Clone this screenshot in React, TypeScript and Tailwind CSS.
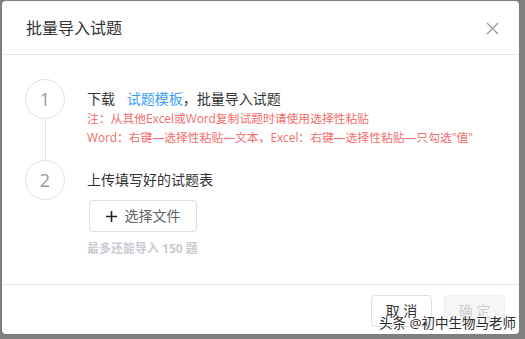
const font = { fontFamily: '"Open Sans", "Noto Sans CJK SC", sans-serif' };

export default function App() {
  return (
    <div className="relative h-[339px] w-[525px] overflow-hidden bg-[#7f7f7f]" style={font}>
      <div className="ml-[2px] mt-[1px] flex h-[333px] w-[517px] flex-col rounded-[4px] bg-white">
        {/* header */}
        <div className="flex h-[54px] shrink-0 items-center justify-between border-b border-[#e8e8e8] pl-6 pr-[20px]">
          <span className="text-base text-[#333]">批量导入试题</span>
          <svg width="13" height="13" viewBox="0 0 13 13" className="mt-[1px]">
            <path d="M1 1L12 12M12 1L1 12" stroke="#999" strokeWidth="1.3" fill="none" />
          </svg>
        </div>

        {/* body */}
        <div className="flex flex-1 flex-col pl-[23px] pt-[24px]">
          <div className="flex h-[81px] gap-[22px]">
            <div className="flex w-10 flex-col items-center">
              <div className="flex h-10 w-10 shrink-0 items-center justify-center rounded-full border border-[#e3e3e3] text-lg text-[#999]">1</div>
              <div className="w-px flex-1 bg-[#e3e3e3]" />
            </div>
            <div className="pt-[10px]">
              <div className="text-sm leading-5 text-[#333]">
                下载 <span className="ml-2 text-[#409eff]">试题模板</span>，批量导入试题
              </div>
              <div className="text-[11.8px] leading-[19px] text-[#f56c6c]">
                <p>注：从其他Excel或Word复制试题时请使用选择性粘贴</p>
                <p>Word：右键—选择性粘贴—文本，Excel：右键—选择性粘贴—只勾选"值"</p>
              </div>
            </div>
          </div>

          <div className="flex gap-[22px]">
            <div className="flex w-10 flex-col items-center">
              <div className="flex h-10 w-10 shrink-0 items-center justify-center rounded-full border border-[#e3e3e3] text-lg text-[#999]">2</div>
            </div>
            <div className="pt-[10px]">
              <div className="text-sm leading-5 text-[#333]">上传填写好的试题表</div>
              <button className="ml-[2px] mt-[10px] flex h-[32px] w-[108px] items-center justify-center gap-[8px] rounded-[4px] border border-[#dcdfe6] bg-white text-sm text-[#606266]">
                <svg width="11" height="11" viewBox="0 0 11 11">
                  <path d="M5.5 0V11M0 5.5H11" stroke="#222" strokeWidth="1.6" />
                </svg>
                选择文件
              </button>
              <div className="mt-[9px] text-xs font-bold leading-4 text-[#c8cbd1]">最多还能导入 150 题</div>
            </div>
          </div>
        </div>

        {/* footer */}
        <div className="flex h-[50px] shrink-0 items-start justify-end gap-3 border-t border-[#e8e8e8] pr-[14px] pt-[10px]">
          <button className="h-[32px] w-[61px] rounded-[4px] border border-[#dcdfe6] bg-white text-sm text-[#333]">取 消</button>
          <button className="h-[32px] w-[61px] rounded-[4px] border border-[#ebeef5] bg-[#f7f7f7] text-sm text-[#c8cbd1]">确 定</button>
        </div>
      </div>

      {/* watermark */}
      <div
        className="absolute left-[379px] top-[313px] whitespace-nowrap text-[13.5px] leading-5 text-[#2a2a2a]"
        style={{ textShadow: '0 0 2px #fff, 0 0 2px #fff, 0 0 3px #fff' }}
      >
        头条 @初中生物马老师
      </div>
    </div>
  );
}
